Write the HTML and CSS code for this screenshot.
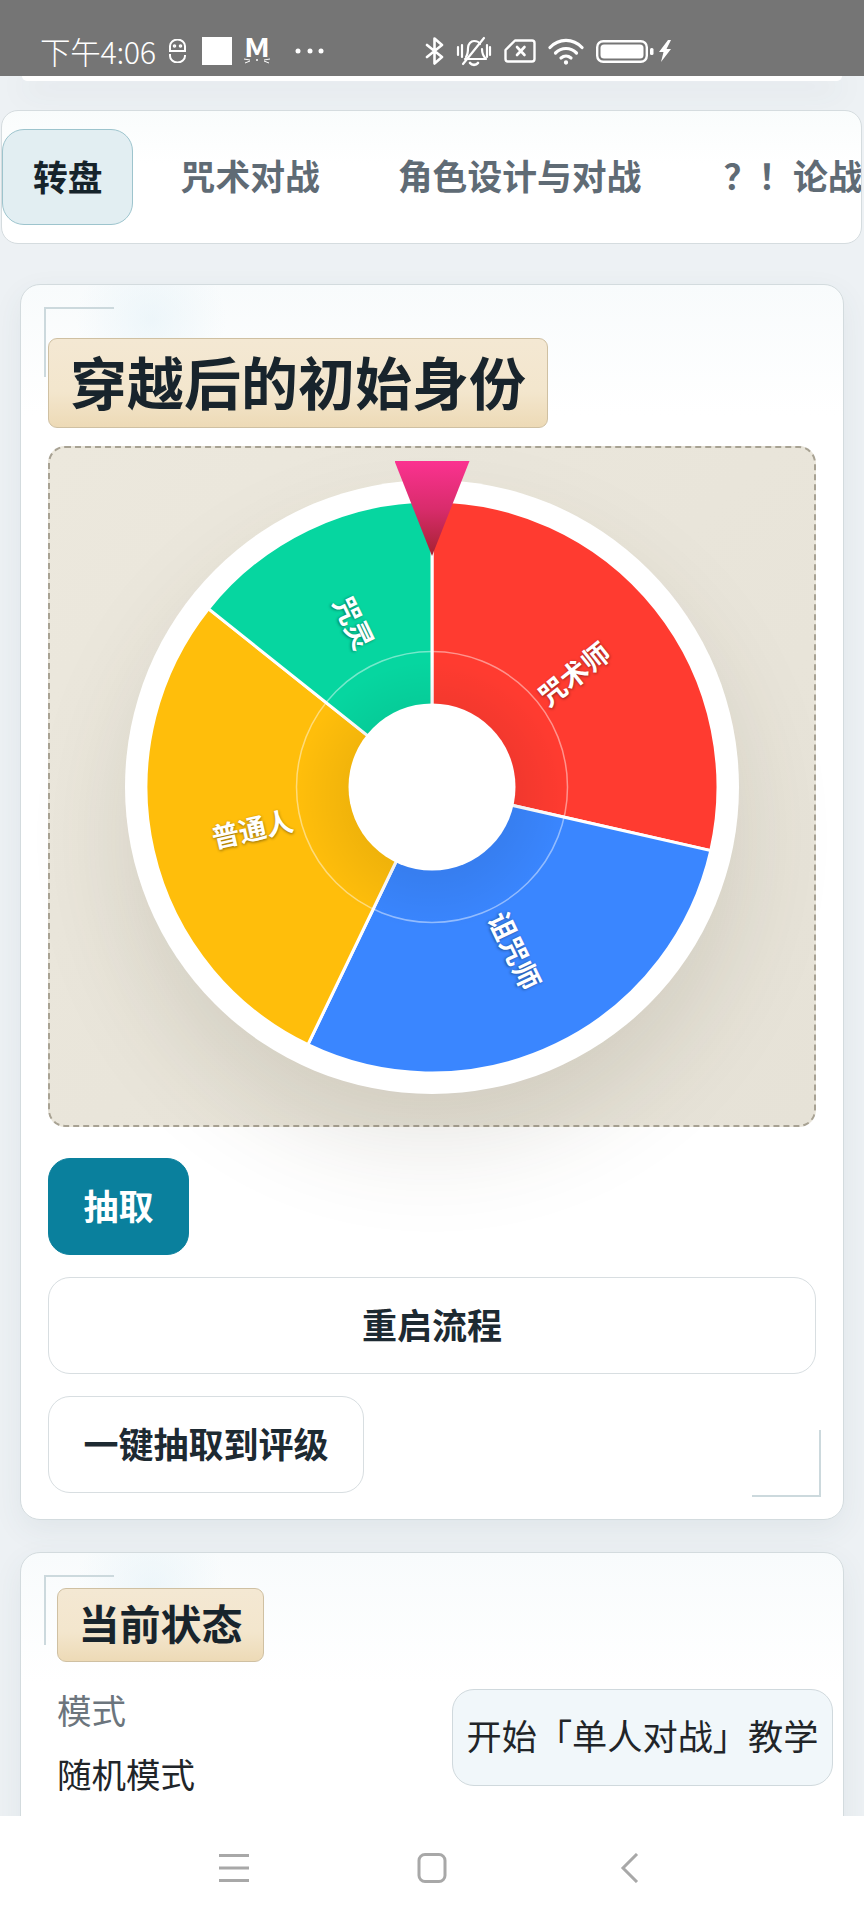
FILE: index.html
```html
<!DOCTYPE html>
<html lang="zh-CN">

<head>
    <meta charset="UTF-8">
    <meta name="viewport" content="width=device-width, initial-scale=1.0">
    <title>转盘</title>
    <link rel="stylesheet" href="styles.css">
</head>

<body>

    <div class="statusbar">
        <div class="status-left">
            <span class="status-time">下午4:06</span>
            <svg class="ico-hotspot" width="19" height="24" viewBox="0 0 19 24" fill="none" stroke="#fff" stroke-width="2">
                <path d="M2 11V7a7 6 0 0 1 15 0v4"/>
                <path d="M1 12h17"/>
                <path d="M2 15v2a7 6 0 0 0 15 0v-1"/>
                <circle cx="6.5" cy="7" r="0.8"/>
                <circle cx="12.5" cy="7" r="0.8"/>
            </svg>
            <span class="ico-square"></span>
            <svg class="ico-mail" width="28" height="26" viewBox="0 0 28 26">
                <text class="ico-mail-letter" x="1" y="19" textLength="26" lengthAdjust="spacingAndGlyphs">M</text>
                <path d="M1 21l6 1M2 25l5-2M27 21l-6 1M26 25l-5-2" stroke="#fff" stroke-width="1" fill="none"/>
                <circle cx="14" cy="22" r="1" fill="#fff"/>
            </svg>
            <svg class="ico-dots" width="30" height="6" viewBox="0 0 30 6" fill="#fff">
                <circle cx="3" cy="3" r="2.500"/>
                <circle cx="15" cy="3" r="2.500"/>
                <circle cx="26" cy="3" r="2.500"/>
            </svg>
        </div>
        <div class="status-right">
            <svg width="19" height="28" viewBox="0 0 19 28" fill="none" stroke="#fff" stroke-width="2.600" stroke-linejoin="round" stroke-linecap="round">
                <path d="M2 8l15 12-7.500 6.500V1.500L17 8 2 20"/>
            </svg>
            <svg width="36" height="31" viewBox="0 0 36 31" fill="none" stroke="#fff" stroke-width="2.200" stroke-linecap="round" stroke-linejoin="round">
                <path d="M10 21c2-3 2-6 2-9 0-4 3-7 6-7s5 1 6 3M26 13c0 4 1 7 4 10H9"/>
                <path d="M14 27c2 2.500 6 2.500 8 0" stroke-width="2.600"/>
                <path d="M7 28L28 2"/>
                <path d="M2 11v8M6 9v12M34 11v8M31 9v12"/>
            </svg>
            <svg width="32" height="24" viewBox="0 0 32 24" fill="none" stroke="#fff" stroke-width="2.400" stroke-linejoin="round" stroke-linecap="round">
                <path d="M11 1.500h17a2.500 2.500 0 0 1 2.500 2.500v16a2.500 2.500 0 0 1-2.500 2.500H4A2.500 2.500 0 0 1 1.500 20v-9z"/>
                <path d="M13 8l7.500 8M20.500 8L13 16" stroke-width="2.600"/>
            </svg>
            <svg width="36" height="27" viewBox="0 0 36 27" fill="none" stroke="#fff" stroke-width="3.200" stroke-linecap="round">
                <path d="M2 9.500c9-9.500 23-9.500 32 0"/>
                <path d="M7.500 15c6-6 15-6 21 0"/>
                <path d="M13 20c3-2.500 7-2.500 10 0"/>
                <circle cx="18" cy="24.500" r="1.400" fill="#fff" stroke-width="1.500"/>
            </svg>
            <svg width="58" height="23" viewBox="0 0 58 23">
                <rect x="1.200" y="1.200" width="49.600" height="20.600" rx="6" fill="none" stroke="#fff" stroke-width="2.400"/>
                <rect x="4.500" y="4.500" width="43" height="14" rx="3.500" fill="#fff"/>
                <rect x="54" y="8" width="3.500" height="7" rx="1.500" fill="#fff"/>
            </svg>
            <svg class="ico-bolt" width="14" height="22" viewBox="0 0 14 22" fill="#fff">
                <path d="M10 0L1 12h4.500L3 22l10-13H8.500L13 0z"/>
            </svg>
        </div>
    </div>

    <div class="page">
        <div class="prev-card"></div>

        <nav class="tabs">
            <a class="tab active">转盘</a>
            <a class="tab">咒术对战</a>
            <a class="tab">角色设计与对战</a>
            <a class="tab">？！论战</a>
        </nav>

        <section class="card">
            <h2 class="card-title">穿越后的初始身份</h2>

            <div class="wheel-box">
                <div class="wheel">
                    <svg width="614" height="614" viewBox="0 0 614 614">
                        <defs>
                            <radialGradient id="hubshade" gradientUnits="userSpaceOnUse" cx="307" cy="316" r="135">
                                <stop offset="0.58" stop-color="#000" stop-opacity="0.06"/>
                                <stop offset="1" stop-color="#000" stop-opacity="0"/>
                            </radialGradient>
                        </defs>
                        <g stroke="#fff" stroke-width="3">
                            <path d="M307 307L307 21A286 286 0 0 1 585.800 370.600Z" fill="#ff3b30"/>
                            <path d="M307 307L585.800 370.600A286 286 0 0 1 182.900 564.700Z" fill="#3a86ff"/>
                            <path d="M307 307L182.900 564.700A286 286 0 0 1 83.400 128.700Z" fill="#ffbe0b"/>
                            <path d="M307 307L83.400 128.700A286 286 0 0 1 307 21Z" fill="#06d6a0"/>
                        </g>
                        <circle cx="307" cy="316" r="135" fill="url(#hubshade)"/>
                        <circle cx="307" cy="307" r="135.500" fill="none" stroke="#fff" stroke-opacity="0.45" stroke-width="1.500"/>
                        <circle cx="307" cy="307" r="83.500" fill="#fff"/>
                        <text class="wheel-label" x="448" y="193" transform="rotate(-38.570 448 193)">咒术师</text>
                        <text class="wheel-label" x="391" y="470" transform="rotate(64.290 391 470)">诅咒师</text>
                        <text class="wheel-label" x="127" y="347.700" transform="rotate(-12.860 127 347.700)">普通人</text>
                        <text class="wheel-label" x="230" y="142.100" transform="rotate(64.290 230 142.100)">咒灵</text>
                    </svg>
                </div>
                <div class="pointer"></div>
            </div>

            <div class="controls">
                <button class="btn btn-primary">抽取</button>
                <button class="btn btn-wide">重启流程</button>
                <button class="btn">一键抽取到评级</button>
            </div>
        </section>

        <section class="card card-status">
            <h2 class="card-title card-title-small">当前状态</h2>
            <div class="status-row">
                <div class="status-info">
                    <div class="status-label">模式</div>
                    <div class="status-value">随机模式</div>
                </div>
                <button class="btn-tutorial">开始「单人对战」教学</button>
            </div>
        </section>
    </div>

    <div class="navbar">
        <svg width="30" height="30" viewBox="0 0 30 30" stroke="#a8a8a8" stroke-width="3">
            <path d="M0 2.500h30M0 15h30M0 27.500h30"/>
        </svg>
        <svg width="30" height="30" viewBox="0 0 30 30" fill="none" stroke="#a8a8a8" stroke-width="3">
            <rect x="2" y="1.500" width="26" height="27" rx="6"/>
        </svg>
        <svg width="30" height="30" viewBox="0 0 30 30" fill="none" stroke="#a8a8a8" stroke-width="3">
            <path d="M22 1L8 15l14 14"/>
        </svg>
    </div>

</body>

</html>
```

FILE: styles.css
```css
* {
    box-sizing: border-box;
}

body {
    margin: 0;
    width: 864px;
    height: 1920px;
    overflow: hidden;
    display: flex;
    flex-direction: column;
    background-color: #edf1f4;
    color: #1d2a32;
    font-family: "Noto Sans CJK SC", "Noto Sans", sans-serif;
}

/* status bar */
.statusbar {
    height: 76px;
    flex: none;
    display: flex;
    align-items: center;
    padding: 26px 0 0 40px;
    background-color: #757575;
    color: white;
}

.status-left {
    width: 385px;
    display: flex;
    align-items: center;
}

.status-time {
    width: 128px;
    font-size: 30.5px;
    line-height: 36px;
    font-weight: 300;
    letter-spacing: -0.3px;
}

.ico-square {
    width: 30px;
    height: 28px;
    margin-left: 15px;
    background-color: white;
}

.ico-mail {
    margin-left: 11px;
    overflow: visible;
}

.ico-mail-letter {
    font-size: 25px;
    font-weight: 700;
    fill: white;
}

.ico-dots {
    margin-left: 24px;
}

.status-right {
    display: flex;
    align-items: center;
    gap: 12px;
}

.ico-bolt {
    margin-left: -8px;
}

/* page */
.page {
    flex: 1;
    min-height: 0;
    overflow: hidden;
}

.prev-card {
    height: 5px;
    margin: 0 22px 29px;
    background-color: white;
    border-radius: 0 0 14px 14px;
    box-shadow: 0 8px 30px rgba(60, 85, 90, 0.18);
}

.tabs {
    height: 134px;
    margin: 0 2px 40px 1px;
    padding: 18px 0;
    display: flex;
    gap: 18px;
    overflow: hidden;
    background: linear-gradient(180deg, #f9fcfc, white 40%);
    border: 1px solid #d5dcdf;
    border-radius: 17px;
}

.tab {
    flex: none;
    height: 96px;
    padding: 0 30px;
    font-size: 34.8px;
    line-height: 92px;
    font-weight: 700;
    color: #5f6b75;
}

.tab:last-child {
    margin-left: 4px;
}

.tab.active {
    padding: 0 29px 0 30px;
    color: #16232b;
    background-color: #e2eef2;
    border: 1px solid #9dc4cd;
    border-radius: 22px;
}

.card {
    position: relative;
    margin: 0 20px 32px;
    padding: 53px 27px 26px 27px;
    background:
        radial-gradient(circle at 130px 35px, rgba(225, 240, 247, 0.5), transparent 75px),
        linear-gradient(180deg, #f8fbfc, white 130px);
    border: 1px solid #d3dbde;
    border-radius: 20px;
    box-shadow: 0 10px 30px rgba(60, 85, 95, 0.07);
}

/* corner brackets */
.card::before {
    content: "";
    position: absolute;
    left: 23px;
    top: 22px;
    width: 68px;
    height: 68px;
    border-top: 2px solid #ccd9dd;
    border-left: 2px solid #ccd9dd;
}

.card::after {
    content: "";
    position: absolute;
    right: 22px;
    bottom: 22px;
    width: 67px;
    height: 65px;
    border-right: 2px solid #ccd9dd;
    border-bottom: 2px solid #ccd9dd;
}

.card-title {
    position: relative;
    z-index: 1;
    display: inline-block;
    margin: 0;
    height: 90px;
    padding: 0 21px;
    font-size: 57px;
    line-height: 83px;
    font-weight: 700;
    color: #18242c;
    background: linear-gradient(180deg, #f4e8d3, #f3e6cd 60%, #eddab6);
    border: 1px solid #cfc0a2;
    border-radius: 9px;
    vertical-align: top;
}

.wheel-box {
    position: relative;
    height: 681px;
    margin-top: 18px;
    display: flex;
    align-items: center;
    justify-content: center;
    background: linear-gradient(135deg, #ece8dd, #e6e2d7);
    border: 2px dashed #a8a293;
    border-radius: 17px;
}

.wheel {
    width: 614px;
    height: 614px;
    background-color: white;
    border-radius: 50%;
    box-shadow: 0 50px 100px rgba(70, 60, 40, 0.13);
}

.wheel svg {
    display: block;
}

.wheel-label {
    font-size: 27.5px;
    font-weight: 700;
    fill: white;
    text-anchor: middle;
    dominant-baseline: central;
    text-shadow: 0 1px 3px rgba(0, 0, 0, 0.45);
}

.pointer {
    position: absolute;
    left: 50%;
    top: 13px;
    width: 75px;
    height: 95px;
    margin-left: -37.500px;
    clip-path: polygon(0 0, 100% 0, 50% 100%);
    background: linear-gradient(180deg, #fb3290, #d92c6c 50%, #a52231);
}

.controls {
    position: relative;
    margin-top: 31px;
    display: flex;
    flex-direction: column;
    align-items: flex-start;
    gap: 22px;
}

.btn {
    height: 97px;
    padding: 0 34.5px 5px;
    font-family: inherit;
    font-size: 35px;
    font-weight: 700;
    color: #1d2a32;
    background-color: white;
    border: 1.500px solid #d8dee1;
    border-radius: 22px;
}

.btn-primary {
    color: white;
    background-color: #0a809d;
    border-color: #0a809d;
}

.btn-wide {
    align-self: stretch;
}

.card-status {
    padding: 35px 10px 60px 36px;
    margin-bottom: 0;
}

.card-status::after {
    display: none;
}

.card-title-small {
    height: 74px;
    padding: 0 20.5px;
    font-size: 41px;
    line-height: 66px;
}

.status-row {
    margin-top: 17px;
    display: flex;
    justify-content: space-between;
    align-items: flex-start;
}

.status-label,
.status-value {
    height: 64px;
    font-size: 34.500px;
    line-height: 60px;
}

.status-label {
    color: #6c757d;
}

.status-value {
    color: #212529;
}

.btn-tutorial {
    width: 381px;
    height: 97px;
    margin-top: 10px;
    padding: 0 0 6px;
    font-family: inherit;
    font-size: 35.2px;
    color: #212529;
    background-color: #f1f7fa;
    border: 1.500px solid #d0d9dd;
    border-radius: 22px;
}

/* bottom nav */
.navbar {
    height: 104px;
    flex: none;
    display: flex;
    align-items: center;
    justify-content: center;
    gap: 168px;
    background-color: white;
    position: relative;
}
```
